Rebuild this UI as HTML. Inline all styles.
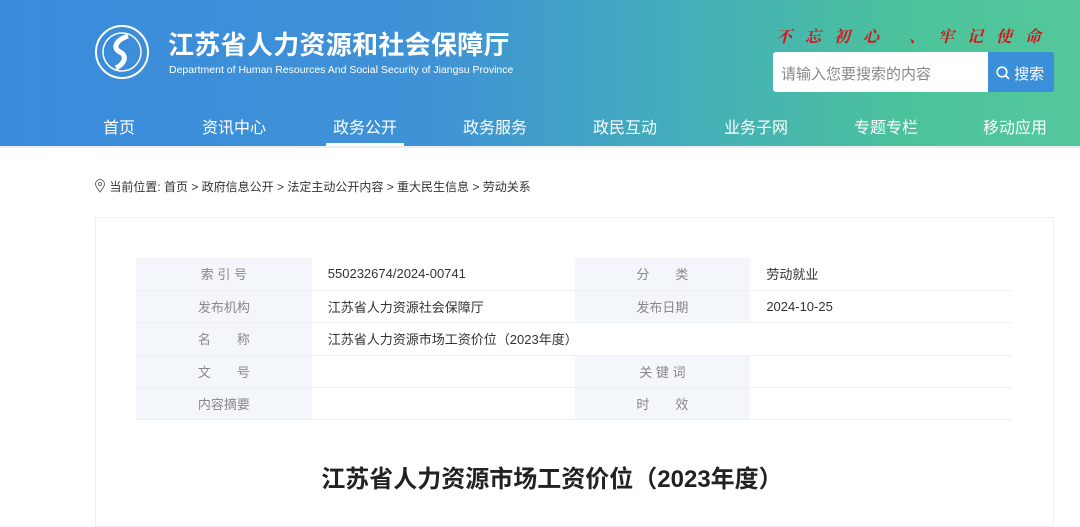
<!DOCTYPE html>
<html><head><meta charset="utf-8"><style>
*{margin:0;padding:0;box-sizing:border-box}
body{width:1080px;height:515px;overflow:hidden;background:#fff;font-family:"Liberation Sans","Noto Sans CJK SC",sans-serif;position:relative}
.hd{position:absolute;left:0;top:0;width:1080px;height:146px;background:linear-gradient(90deg,#3a8bdc 0%,#3f92d6 40%,#44b0b8 65%,#4cc39a 85%,#55c79c 100%)}
.abs{position:absolute}
.nav a{position:absolute;top:114px;color:#fff;font-size:16px;width:120px;text-align:center;text-decoration:none}
table{position:absolute;left:136px;top:258px;width:877px;border-collapse:collapse;font-size:13px}
td{height:32.4px;border-bottom:1px solid #eef0f3;padding:0}
td.l{background:#f3f6fb;color:#888;text-align:center;width:176px}
td.v{color:#333;padding-left:16px;width:263px}
</style></head><body>
<div class="hd"></div>
<svg class="abs" style="left:94px;top:24px" width="56" height="56" viewBox="0 0 56 56"><circle cx="28" cy="28" r="26" fill="none" stroke="#fff" stroke-width="2"/><circle cx="28" cy="28" r="19" fill="none" stroke="#fff" stroke-width="1.5"/><path d="M34 12 C22 16 18 24 26 28 C34 32 30 40 22 44" fill="none" stroke="#fff" stroke-width="5"/></svg>
<div class="abs" style="left:168px;top:25px;color:#fff;font-size:26px;font-weight:bold;letter-spacing:0.3px">江苏省人力资源和社会保障厅</div>
<div class="abs" style="left:169px;top:64px;color:#fff;font-size:10.5px">Department of Human Resources And Social Security of Jiangsu Province</div>
<div class="abs" style="left:776px;top:24px;color:#d8131a;font-size:16px;font-style:italic;font-weight:bold;letter-spacing:13px;font-family:'Noto Serif CJK SC',serif">不忘初心 、牢记使命</div>
<div class="abs" style="left:773px;top:52px;width:216px;height:40px;background:#fff;border-radius:3px 0 0 3px;color:#888;font-size:15px;padding:11px 0 0 8px">请输入您要搜索的内容</div>
<div class="abs" style="left:988px;top:52px;width:66px;height:40px;background:#3b8fd9;border-radius:0 3px 3px 0;color:#fff;font-size:15px;padding:11px 0 0 8px"><svg width="14" height="14" viewBox="0 0 14 14" style="vertical-align:-1px"><circle cx="6" cy="6" r="4.8" fill="none" stroke="#fff" stroke-width="1.6"/><path d="M9.5 9.5L13 13" stroke="#fff" stroke-width="1.6"/></svg> 搜索</div>
<div class="nav">
<a style="left:59px">首页</a><a style="left:174px">资讯中心</a><a style="left:305px">政务公开</a><a style="left:435px">政务服务</a><a style="left:565px">政民互动</a><a style="left:696px">业务子网</a><a style="left:826px">专题专栏</a><a style="left:955px">移动应用</a>
</div>
<div class="abs" style="left:326px;top:143px;width:78px;height:3px;background:#fff"></div>
<div class="abs" style="left:0;top:146px;width:1080px;height:2px;background:#eee"></div>
<div class="abs" style="left:94px;top:178px;font-size:12px;color:#333"><svg width="12" height="14" viewBox="0 0 12 14" style="vertical-align:-2px"><path d="M6 13C2 8 1.5 6.5 1.5 5a4.5 4.5 0 0 1 9 0c0 1.5-.5 3-4.5 8z" fill="none" stroke="#666"/><circle cx="6" cy="5" r="1.6" fill="none" stroke="#666"/></svg> 当前位置: 首页 &gt; 政府信息公开 &gt; 法定主动公开内容 &gt; 重大民生信息 &gt; 劳动关系</div>
<div class="abs" style="left:95px;top:217px;width:959px;height:310px;border:1px solid #f0f0f0"></div>
<table>
<tr><td class="l">索 引 号</td><td class="v">550232674/2024-00741</td><td class="l">分　　类</td><td class="v">劳动就业</td></tr>
<tr><td class="l">发布机构</td><td class="v">江苏省人力资源社会保障厅</td><td class="l">发布日期</td><td class="v">2024-10-25</td></tr>
<tr><td class="l">名　　称</td><td class="v" colspan="3">江苏省人力资源市场工资价位（2023年度）</td></tr>
<tr><td class="l">文　　号</td><td class="v"></td><td class="l">关 键 词</td><td class="v"></td></tr>
<tr><td class="l">内容摘要</td><td class="v"></td><td class="l">时　　效</td><td class="v"></td></tr>
</table>
<div class="abs" style="left:0;top:459px;width:1104px;text-align:center;font-size:24px;font-weight:bold;color:#222">江苏省人力资源市场工资价位（2023年度）</div>
</body></html>
